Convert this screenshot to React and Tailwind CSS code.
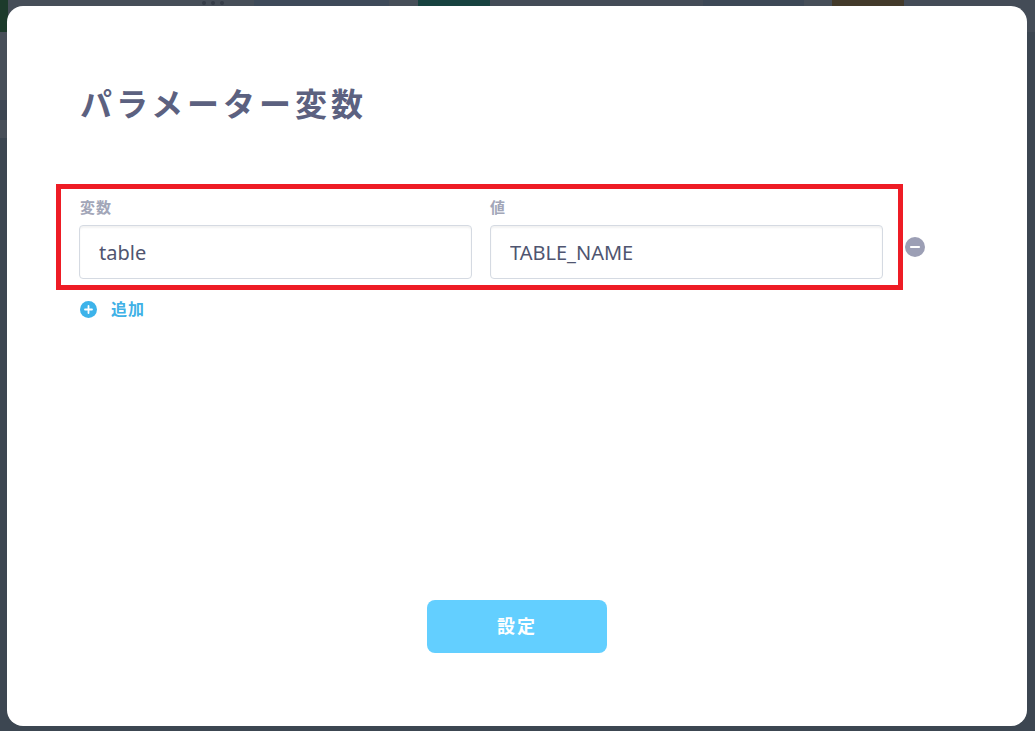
import { useState } from "react";

const font = { fontFamily: '"Noto Sans", "Noto Sans CJK JP", sans-serif' };

function PlusCircle() {
  return (
    <svg width="17" height="17" viewBox="0 0 17 17">
      <circle cx="8.5" cy="8.5" r="8.5" fill="#3db3ea" />
      <path d="M8.5 5v7M5 8.5h7" stroke="#fff" strokeWidth="1.8" strokeLinecap="round" />
    </svg>
  );
}

function MinusCircle() {
  return (
    <svg width="20" height="20" viewBox="0 0 20 20">
      <circle cx="10" cy="10" r="10" fill="#9c9fb5" />
      <path d="M6 10h8" stroke="#fff" strokeWidth="2.2" strokeLinecap="round" />
    </svg>
  );
}

// background app, dimmed behind the modal
function Backdrop() {
  return (
    <div className="flex h-full flex-col">
      <div className="flex h-[32px] shrink-0">
        <div className="w-[8px] bg-[#1c3a2b]" />
        <div className="flex w-[246px] items-start justify-end gap-[5px] bg-[#464e58] pr-[30px] pt-[1px]">
          <span className="h-[4px] w-[4px] rounded-full bg-[#353c47]" />
          <span className="h-[4px] w-[4px] rounded-full bg-[#353c47]" />
          <span className="h-[4px] w-[4px] rounded-full bg-[#353c47]" />
        </div>
        <div className="w-[135px] bg-[#3e4a59]" />
        <div className="w-[29px] bg-[#464e58]" />
        <div className="w-[72px] bg-[#17423f]" />
        <div className="w-[213px] bg-[#444c57]" />
        <div className="w-[101px] bg-[#3d4856]" />
        <div className="w-[28px] bg-[#464e58]" />
        <div className="w-[72px] bg-[#433a2a]" />
        <div className="flex-1 bg-[#444c57]" />
      </div>
      <div className="flex flex-1">
        <div className="flex w-[7px] flex-col">
          <div className="h-[68px] bg-[#484f59]" />
          <div className="h-[10px] bg-[#3f4855]" />
          <div className="h-[10px] bg-[#3b4450]" />
          <div className="h-[18px] bg-[#484f59]" />
          <div className="flex-1 bg-[#3c4651]" />
        </div>
        <div className="flex-1 bg-[#3c4651]" />
      </div>
    </div>
  );
}

export default function App() {
  const [rows, setRows] = useState([{ key: "table", value: "TABLE_NAME" }]);

  return (
    <div className="relative h-[731px] w-full overflow-hidden bg-[#3c4651]" style={font}>
      <Backdrop />

      <div className="absolute left-[7px] top-[6px] flex h-[720px] w-[1020px] flex-col rounded-2xl bg-white px-[72px] pt-[78px]">
        <h2 className="h-[40px] pl-[1px] text-[32px] font-bold leading-[40px] tracking-[4px] text-[#5c6180]">
          パラメーター変数
        </h2>

        <div className="mt-[73px] flex flex-col gap-[10px]">
          {rows.map((r, i) => (
            <div key={i} className="flex items-end">
              <div className="flex w-[393px] flex-col">
                <label className="mb-[8px] h-[20px] pl-[1px] text-[15px] font-bold leading-[20px] tracking-[1px] text-[#a2a6b8]">
                  変数
                </label>
                <input
                  className="h-[54px] w-full rounded-[4px] border border-[#d5dae2] px-[19px] text-[20px] text-[#4f5570] shadow-[inset_0_2px_2px_rgba(0,0,0,0.05)] outline-none"
                  value={r.key}
                  onChange={(e) =>
                    setRows((rs) => rs.map((x, j) => (j === i ? { ...x, key: e.target.value } : x)))
                  }
                />
              </div>
              <div className="ml-[18px] flex w-[393px] flex-col">
                <label className="mb-[8px] h-[20px] text-[15px] font-bold leading-[20px] text-[#a2a6b8]">
                  値
                </label>
                <input
                  className="h-[54px] w-full rounded-[4px] border border-[#d5dae2] px-[19px] text-[20px] text-[#4f5570] shadow-[inset_0_2px_2px_rgba(0,0,0,0.05)] outline-none"
                  value={r.value}
                  onChange={(e) =>
                    setRows((rs) => rs.map((x, j) => (j === i ? { ...x, value: e.target.value } : x)))
                  }
                />
              </div>
              <button
                className="ml-[22px] flex h-[54px] items-center pb-[10px]"
                onClick={() => setRows((rs) => rs.filter((_, j) => j !== i))}
              >
                <MinusCircle />
              </button>
            </div>
          ))}
        </div>

        <button
          className="mt-[18px] flex h-[24px] items-center gap-[14px] self-start pl-[1px]"
          onClick={() => setRows((rs) => [...rs, { key: "", value: "" }])}
        >
          <PlusCircle />
          <span className="text-[16px] font-bold leading-[24px] tracking-[1px] text-[#40b1e6]">追加</span>
        </button>

        <button className="mb-[73px] mt-auto flex h-[53px] w-[180px] items-center justify-center self-center rounded-[8px] bg-[#63cfff] text-[18px] font-bold tracking-[2px] text-white">
          設定
        </button>

        {/* highlight annotation */}
        <div className="pointer-events-none absolute left-[49px] top-[178px] h-[106px] w-[847px] border-[5px] border-[#ee1c25]" />
      </div>
    </div>
  );
}
